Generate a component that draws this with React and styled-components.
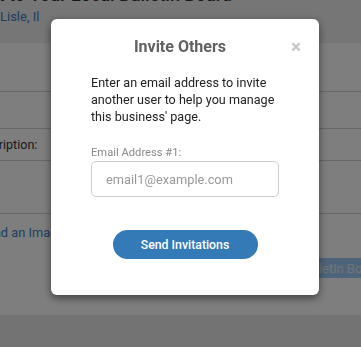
import React from "react";
import styled, { createGlobalStyle } from "styled-components";

const GlobalStyle = createGlobalStyle`
  html, body {
    margin: 0;
    padding: 0;
    height: 100%;
    overflow: hidden;
    font-family: Roboto, "Liberation Sans", sans-serif;
  }
  #root {
    height: 100%;
  }
`;

const Page = styled.div`
  height: 100%;
  display: flex;
  flex-direction: column;
  background: #e6e6e6;
`;

const Header = styled.header`
  background: #ececec;
  height: 43px;
  overflow: hidden;
  display: flex;
  flex-direction: column;
`;

const TitleRow = styled.div`
  width: 232px;
  margin-top: -16px;
  display: flex;
  justify-content: flex-end;
`;

const Title = styled.h1`
  margin: 0;
  font-size: 18px;
  line-height: 22px;
  font-weight: 500;
  color: #333;
  white-space: nowrap;
`;

const Location = styled.a`
  margin-top: 3px;
  font-size: 13px;
  line-height: 16px;
  color: #3a7cc2;
`;

const Main = styled.main`
  background: #fdfdfd;
  height: 272px;
  margin-left: -29px;
  width: 422px;
  display: flex;
  flex-direction: column;
`;

const Row = styled.div`
  box-sizing: border-box;
  height: ${({ h }) => h}px;
  border-bottom: ${({ line }) => (line ? "1px solid #cfcfcf" : "none")};
  display: flex;
  align-items: center;
  font-size: 12.5px;
  color: #333;
`;

const Link = styled.span`
  margin-left: -3px;
  font-size: 12.8px;
  color: #3a7cc2;
`;

const Actions = styled.div`
  flex: 1;
  display: flex;
  justify-content: flex-end;
  align-items: flex-start;
  padding-top: 8px;
`;

const SubmitButton = styled.button`
  height: 20px;
  padding: 0 12px;
  border: none;
  border-radius: 4px;
  background: #9cc9f5;
  color: #e4eaf0;
  font-family: inherit;
  font-size: 13px;
`;

const Overlay = styled.div`
  position: fixed;
  inset: 0;
  background: rgba(0, 0, 0, 0.5);
  padding: 19px 0 0 51px;
`;

const Modal = styled.div`
  width: 268px;
  height: 276px;
  box-sizing: border-box;
  background: #fff;
  border-radius: 6px;
  box-shadow: 0 3px 9px rgba(0, 0, 0, 0.5);
  display: flex;
  flex-direction: column;
`;

const ModalHeader = styled.div`
  display: flex;
  align-items: flex-start;
  padding: 18px 18px 0;
`;

const ModalTitle = styled.h2`
  flex: 1;
  margin: 0;
  text-align: center;
  font-size: 16px;
  line-height: 20px;
  font-weight: 700;
  color: #616161;
`;

const Close = styled.span`
  font-size: 19px;
  line-height: 19px;
  font-weight: 700;
  color: #c8c8c8;
`;

const ModalBody = styled.div`
  padding: 17px 40px 0;
  display: flex;
  flex-direction: column;
`;

const Intro = styled.p`
  margin: 0 0 21px;
  font-size: 12.6px;
  line-height: 17px;
  color: #222;
`;

const Label = styled.label`
  font-size: 11.2px;
  line-height: 14px;
  color: #8a8a8a;
  margin-bottom: 1px;
`;

const Input = styled.input`
  height: 36px;
  box-sizing: border-box;
  border: 1px solid #ccc;
  border-radius: 5px;
  padding: 0 14px;
  font-family: inherit;
  font-size: 12.8px;
  color: #333;
  &::placeholder {
    color: #999;
  }
  &:focus {
    outline: none;
  }
`;

const SendButton = styled.button`
  align-self: center;
  margin-top: 33px;
  width: 145px;
  height: 29px;
  border: none;
  border-radius: 15px;
  background: #337ab7;
  color: #fff;
  font-family: inherit;
  font-size: 12.3px;
  font-weight: 500;
`;

const App = () => {
  return (
    <>
      <GlobalStyle />
      <Page>
        <Header>
          <TitleRow>
            <Title>Post to Your Local Bulletin Board</Title>
          </TitleRow>
          <Location>Lisle, Il</Location>
        </Header>
        <Main>
          <Row h={49} line />
          <Row h={37} line />
          <Row h={32} line>
            Description:
          </Row>
          <Row h={53} line />
          <Row h={36}>
            <Link>Upload an Image</Link>
          </Row>
          <Actions>
            <SubmitButton>Post to Bulletin Board</SubmitButton>
          </Actions>
        </Main>
      </Page>
      <Overlay>
        <Modal>
          <ModalHeader>
            <ModalTitle>Invite Others</ModalTitle>
            <Close>×</Close>
          </ModalHeader>
          <ModalBody>
            <Intro>
              Enter an email address to invite another user to help you manage
              this business' page.
            </Intro>
            <Label>Email Address #1:</Label>
            <Input placeholder="email1@example.com" />
            <SendButton>Send Invitations</SendButton>
          </ModalBody>
        </Modal>
      </Overlay>
    </>
  );
};

export default App;
